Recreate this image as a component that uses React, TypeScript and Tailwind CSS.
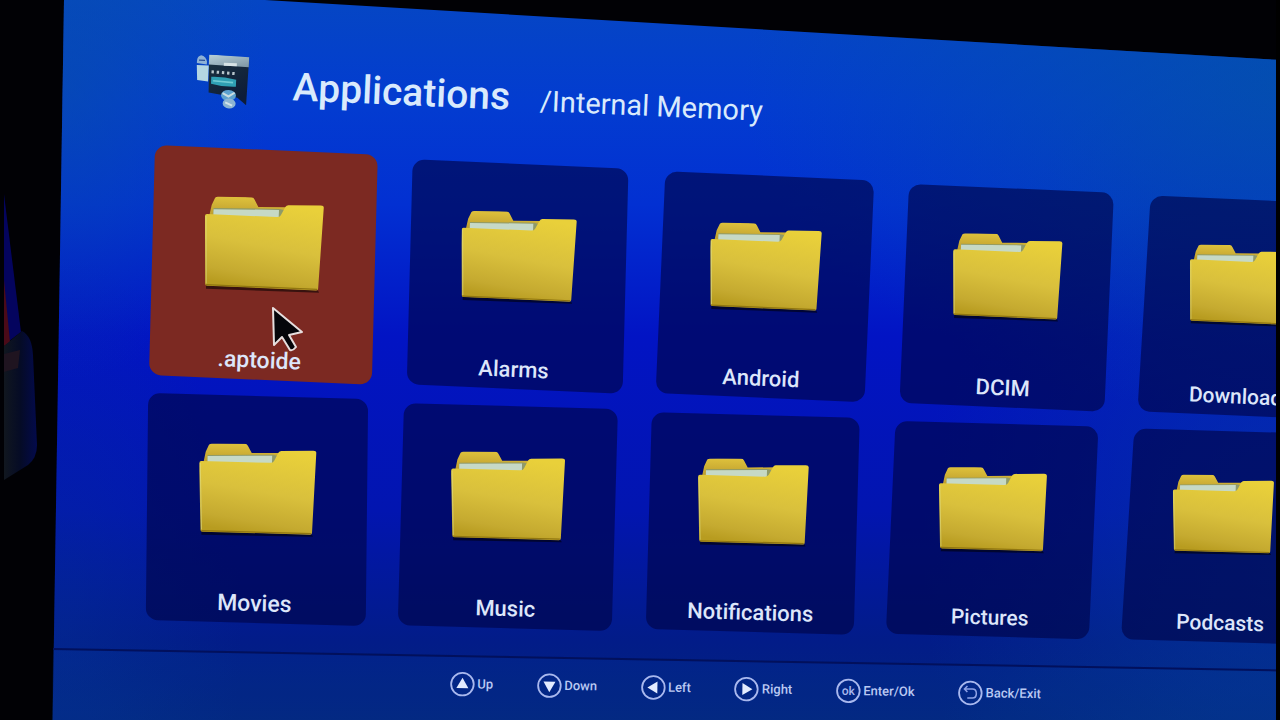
import { useState, type ReactNode } from "react";
import clsx from "clsx";

type Folder = {
  name: string;
  box: string;
  text: string;
  lean: string;
};

const TOP_ROW: Folder[] = [
  { name: ".aptoide", box: "h-[230px] pt-12", text: "text-[23px]", lean: "skew-x-1" },
  { name: "Alarms", box: "h-[225px] pt-12", text: "text-[22px]", lean: "skew-x-1" },
  { name: "Android", box: "h-[222px] pt-12", text: "text-[22px]", lean: "skew-x-0" },
  { name: "DCIM", box: "h-[219px] pt-[46px]", text: "text-[22px]", lean: "skew-x-0" },
  { name: "Download", box: "h-[216px] pt-[46px]", text: "text-[21px]", lean: "-skew-x-1" },
];

const BOTTOM_ROW: Folder[] = [
  { name: "Movies", box: "h-[227px] pt-12", text: "text-[23px]", lean: "skew-x-1" },
  { name: "Music", box: "h-[222px] pt-[46px]", text: "text-[22px]", lean: "skew-x-0" },
  { name: "Notifications", box: "h-[217px] pt-11", text: "text-[22px]", lean: "skew-x-0" },
  { name: "Pictures", box: "h-[213px] pt-11", text: "text-[21px]", lean: "-skew-x-1" },
  { name: "Podcasts", box: "h-[211px] pt-11", text: "text-[21px]", lean: "-skew-x-2" },
];

function FolderIcon() {
  return (
    <svg viewBox="0 0 116 92" className="relative w-[54%]" aria-hidden="true">
      <defs>
        <linearGradient id="folder-front" x1="0.6" y1="0" x2="0.4" y2="1">
          <stop offset="0" stopColor="#e9d03a" />
          <stop offset="0.5" stopColor="#d9c03c" />
          <stop offset="0.85" stopColor="#c5aa30" />
          <stop offset="1" stopColor="#b89c20" />
        </linearGradient>
        <linearGradient id="folder-back" x1="0" y1="0" x2="0" y2="1">
          <stop offset="0" stopColor="#dfc23c" />
          <stop offset="1" stopColor="#b3922a" />
        </linearGradient>
      </defs>
      <path d="M4 86 L112 87 L113 89 L4 90 Z" fill="#000" opacity="0.55" />
      <path
        d="M4 20 L6 9 L9 2 Q10 1 12 1 L44 0 Q46 0 47 2 L51 9 L80 8 L80 24 L4 24 Z"
        fill="url(#folder-back)"
      />
      <path d="M8 12 L72 10 L76 11 L72 21 L8 21 Z" fill="#8f9a68" />
      <path d="M8 13 L71 11 L71 21 L8 21 Z" fill="#c6d9c6" />
      <path
        d="M0 20 Q0 18 2 18 L69 18 Q72 18 73 16 L77 8 Q78 6 80 6 L111 5 Q114 5 114 7 L112 85 Q112 87 110 87 L5 87 Q3 87 3 85 Z"
        fill="url(#folder-front)"
      />
      <path d="M1 20 L4 85" stroke="#dfe08a" strokeWidth="1" opacity="0.6" fill="none" />
      <path d="M4 86 L111 86" stroke="#8f7510" strokeWidth="1.2" fill="none" />
    </svg>
  );
}

function AppsIcon() {
  return (
    <svg viewBox="0 0 56 58" className="h-[58px] w-14 flex-none" aria-hidden="true">
      <defs>
        <linearGradient id="apps-bar" x1="0" y1="0" x2="1" y2="1">
          <stop offset="0" stopColor="#b9d0d8" />
          <stop offset="1" stopColor="#7d95a3" />
        </linearGradient>
        <linearGradient id="apps-body" x1="0" y1="0" x2="0.6" y2="1">
          <stop offset="0" stopColor="#1c3340" />
          <stop offset="1" stopColor="#0d1c38" />
        </linearGradient>
      </defs>
      <path d="M1 7 Q1 2 5 1 Q10 2 11 7 L11 10 L1 9 Z" fill="#8eb2d6" />
      <path d="M3 6 L9 6" stroke="#2c4f96" strokeWidth="1.4" />
      <path d="M1 11 L13 11 L13 27 L2 26 Z" fill="#b4d6e2" />
      <path d="M13 2 L53 2 L52 49 L43 42 L14 38 Z" fill="url(#apps-body)" />
      <path d="M13 0 L53 1 L53 11 L13 10 Z" fill="url(#apps-bar)" />
      <path d="M28 9 L41 9" stroke="#d7e3e6" strokeWidth="3" />
      <path d="M16 17 L42 18" stroke="#b8c6cc" strokeWidth="3" strokeDasharray="2.4 2.8" />
      <path d="M16 22 Q28 21 41 24 L41 31 Q28 32 16 29 Z" fill="#2fa0b4" />
      <path d="M18 26 L38 27" stroke="#70cbd4" strokeWidth="1.6" />
      <ellipse cx="34" cy="40" rx="7.5" ry="5.5" fill="#5da1cf" />
      <path d="M28 38 L34 41 L40 37" stroke="#c9dce0" strokeWidth="2" fill="none" />
      <ellipse cx="35" cy="48" rx="6.5" ry="5" fill="#8cb4d2" />
      <path d="M31 47 L38 50" stroke="#d2e3ea" strokeWidth="2" />
    </svg>
  );
}

function FolderTile({
  folder,
  selected,
  onSelect,
}: {
  folder: Folder;
  selected: boolean;
  onSelect: () => void;
}) {
  return (
    <button
      type="button"
      onClick={onSelect}
      className={clsx(
        "relative flex min-w-0 flex-col items-center justify-between pb-[5px]",
        folder.box,
      )}
    >
      <span
        className={clsx(
          "absolute inset-0 rounded-xl",
          folder.lean,
          selected ? "bg-[#7c2922]" : "bg-[#00054a]/65",
        )}
      />
      <FolderIcon />
      <span className={clsx("relative leading-7 font-medium text-[#dde6fa]", folder.text)}>
        {folder.name}
      </span>
    </button>
  );
}

function Hint({ label, children }: { label: string; children: ReactNode }) {
  return (
    <li className="flex items-center gap-[2px]">
      <svg viewBox="0 0 26 26" className="size-[26px]" fill="none" aria-hidden="true">
        <circle cx="13" cy="13" r="11.3" stroke="#a9b8ee" strokeWidth="1.8" />
        {children}
      </svg>
      <span>{label}</span>
    </li>
  );
}

export default function App() {
  const [selected, setSelected] = useState(".aptoide");

  const renderTile = (folder: Folder) => (
    <FolderTile
      key={folder.name}
      folder={folder}
      selected={selected === folder.name}
      onSelect={() => setSelected(folder.name)}
    />
  );

  return (
    <main className="relative min-h-screen overflow-hidden bg-[#010105] font-[Roboto,sans-serif]">
      {/* lit panel of the TV */}
      <div className="absolute inset-0 bg-[radial-gradient(ellipse_42%_45%_at_100%_12%,rgba(4,84,165,0.7),transparent),radial-gradient(ellipse_28%_70%_at_100%_75%,rgba(4,70,160,0.5),transparent),radial-gradient(ellipse_16%_40%_at_5%_12%,rgba(8,80,165,0.55),transparent),radial-gradient(ellipse_14%_50%_at_5%_85%,rgba(4,50,150,0.4),transparent),linear-gradient(180deg,#0546c4_0%,#033cd0_14%,#0230d2_28%,#0214c4_46%,#0215b0_70%,#021c88_88%,#03267c_100%)] [clip-path:polygon(5%_0,20.7%_0,99.7%_8.2%,99.7%_100%,4.1%_100%)]" />

      {/* pen lying beside the screen */}
      <svg
        viewBox="0 0 40 300"
        className="absolute top-[190px] left-0 h-[300px] w-10"
        aria-hidden="true"
      >
        <defs>
          <linearGradient id="pen-body" x1="0" y1="0" x2="1" y2="0">
            <stop offset="0" stopColor="#11171f" />
            <stop offset="0.5" stopColor="#050b26" />
            <stop offset="1" stopColor="#030a4c" />
          </linearGradient>
        </defs>
        <path d="M4 4 L21 142 L4 155 Z" fill="#04045e" />
        <path d="M4 90 L10 152 L4 156 Z" fill="#4a0a18" />
        <path d="M4 156 L22 141 Q32 146 33 165 L37 255 Q37 268 28 275 L4 290 Z" fill="url(#pen-body)" />
        <path d="M4 164 L20 160 L18 178 L4 182 Z" fill="#1f1420" />
      </svg>

      <div className="relative pt-[54px]">
        <header className="ml-[195px] flex origin-left rotate-[2.5deg] items-center gap-[42px] text-[#d9eafc]">
          <AppsIcon />
          <div className="flex items-baseline gap-[30px] whitespace-nowrap">
            <h1 className="text-[39px] leading-[50px] font-medium">Applications</h1>
            <p className="text-[29px]">/Internal Memory</p>
          </div>
        </header>

        <section
          aria-label="Folders, first row"
          className="mt-[33px] -mr-14 ml-[152px] grid origin-left rotate-[2.5deg] grid-cols-[223fr_216fr_209fr_205fr_191fr] items-center gap-[35px]"
        >
          {TOP_ROW.map(renderTile)}
        </section>

        <section
          aria-label="Folders, second row"
          className="mt-[18px] -mr-[38px] ml-[147px] grid origin-left rotate-[1.6deg] grid-cols-[220fr_214fr_208fr_203fr_190fr] items-center gap-[34px]"
        >
          {BOTTOM_ROW.map(renderTile)}
        </section>

        <footer className="mt-7 -mr-2 ml-[53px] origin-top-left rotate-1 border-t-2 border-[#02105c] bg-[#0440a0]/15 pt-[14px] pb-10">
          <ul className="flex gap-[43px] pl-[397px] text-[13px] font-medium whitespace-nowrap text-[#b9c8f2]">
            <Hint label="Up">
              <path d="M13 6.5 L19 17 L7 17 Z" fill="#e3ebff" />
            </Hint>
            <Hint label="Down">
              <path d="M13 19.5 L7 9 L19 9 Z" fill="#e3ebff" />
            </Hint>
            <Hint label="Left">
              <path d="M7 13 L17 7 L17 19 Z" fill="#e3ebff" />
            </Hint>
            <Hint label="Right">
              <path d="M19 13 L9 7 L9 19 Z" fill="#e3ebff" />
            </Hint>
            <Hint label="Enter/Ok">
              <text x="13" y="17" textAnchor="middle" fontSize="12" fill="#a9b8ee">
                ok
              </text>
            </Hint>
            <Hint label="Back/Exit">
              <path
                d="M10 6 L7 9 L10 12 M7 9 H15 Q19 9 19 13.5 Q19 18 15 18 H10"
                stroke="#8fa2e6"
                strokeWidth="1.5"
              />
            </Hint>
          </ul>
        </footer>
      </div>

      <svg
        viewBox="0 0 34 48"
        className="pointer-events-none absolute top-[306px] left-[271px] h-12 w-[34px]"
        aria-hidden="true"
      >
        <path
          d="M2 2 L3 39 L11 31 L19 44 Q22 45 25 41 L18 29 L31 26 Z"
          fill="#05050a"
          stroke="#e6dede"
          strokeWidth="2"
          strokeLinejoin="round"
        />
      </svg>
      <div className="absolute inset-y-0 right-0 w-1 bg-black" />
    </main>
  );
}
